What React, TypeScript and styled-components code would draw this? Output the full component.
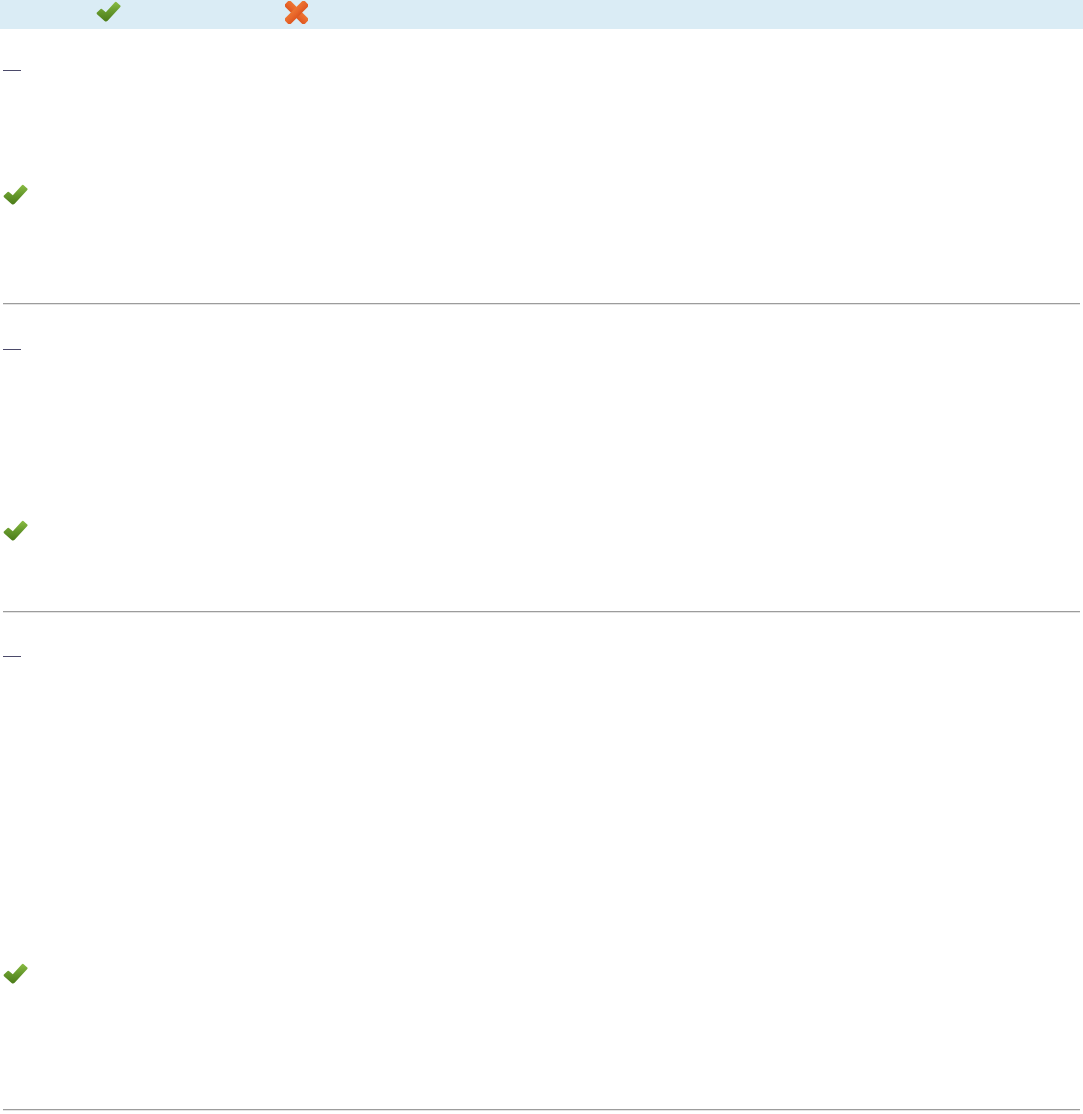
import React from "react";
import styled, { createGlobalStyle } from "styled-components";

const Global = createGlobalStyle`
  html, body { margin: 0; padding: 0; background: #ffffff; }
  body { font-family: "Liberation Sans", Arial, sans-serif; font-size: 13px; color: #333; }
`;

const Page = styled.div`
  width: 1083px;
`;

const Toolbar = styled.div`
  height: 29px;
  background: #daecf5;
  display: flex;
  align-items: flex-start;
  padding-left: 96px;
  box-sizing: border-box;
`;

const ToolButton = styled.span<{ $gap?: number }>`
  display: inline-flex;
  margin-top: 1px;
  margin-left: ${(p) => p.$gap ?? 0}px;
`;

const Section = styled.section<{ $top: number }>`
  padding: ${(p) => p.$top}px 3px 0;
`;

const BlankLink = styled.a`
  display: block;
  width: 18px;
  height: 0;
  border-bottom: 1px solid #4b4a6a;
`;

const CheckRow = styled.div<{ $top: number }>`
  margin-top: ${(p) => p.$top}px;
  height: 21px;
  display: flex;
  align-items: center;
`;

const Rule = styled.hr<{ $top: number }>`
  margin: ${(p) => p.$top}px 0 0;
  height: 0;
  border: 0;
  border-top: 1px solid #9c9c9c;
  border-bottom: 1px solid #e4e4e4;
`;

const Check = ({ id }: { id: string }) => (
  <svg width="25" height="21" viewBox="0 0 25 21">
    <defs>
      <linearGradient id={id} x1="0" y1="0" x2="0" y2="21" gradientUnits="userSpaceOnUse">
        <stop offset="0" stopColor="#8dbf45" />
        <stop offset="0.5" stopColor="#66992c" />
        <stop offset="1" stopColor="#4a7a18" />
      </linearGradient>
    </defs>
    <path
      d="M0.9 11.6 L4.6 8.1 Q5.2 7.6 5.9 8.1 L9.8 11.3 L18.9 1.2 Q19.6 0.5 20.4 1.1 L24.3 4.6 Q24.9 5.3 24.3 6 L11.6 19.8 Q10.1 21.1 8.6 19.9 L1 13.2 Q0.3 12.4 0.9 11.6 Z"
      fill={`url(#${id})`}
    />
  </svg>
);

const Cross = () => (
  <svg width="23" height="23" viewBox="0 0 23 23">
    <defs>
      <linearGradient id="crossGrad" x1="0" y1="0" x2="0" y2="23" gradientUnits="userSpaceOnUse">
        <stop offset="0" stopColor="#f5913f" />
        <stop offset="0.5" stopColor="#e8662a" />
        <stop offset="1" stopColor="#c93a0b" />
      </linearGradient>
    </defs>
    <g fill="url(#crossGrad)">
      <rect x="-2.5" y="7.5" width="28" height="8" rx="2.5" transform="rotate(45 11.5 11.5)" />
      <rect x="-2.5" y="7.5" width="28" height="8" rx="2.5" transform="rotate(-45 11.5 11.5)" />
    </g>
  </svg>
);

export default function App() {
  return (
    <Page>
      <Global />
      <Toolbar>
        <ToolButton>
          <Check id="tbCheck" />
        </ToolButton>
        <ToolButton $gap={164}>
          <Cross />
        </ToolButton>
      </Toolbar>

      <Section $top={41}>
        <BlankLink href="#" aria-label="item" />
        <CheckRow $top={113}>
          <Check id="c1" />
        </CheckRow>
        <Rule $top={98} />
      </Section>

      <Section $top={44}>
        <BlankLink href="#" aria-label="item" />
        <CheckRow $top={170}>
          <Check id="c2" />
        </CheckRow>
        <Rule $top={70} />
      </Section>

      <Section $top={43}>
        <BlankLink href="#" aria-label="item" />
        <CheckRow $top={306}>
          <Check id="c3" />
        </CheckRow>
        <Rule $top={125} />
      </Section>
    </Page>
  );
}
